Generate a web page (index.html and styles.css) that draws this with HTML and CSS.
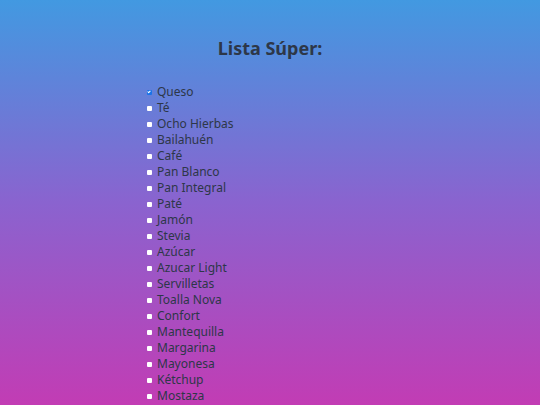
FILE: index.html
```html
<!DOCTYPE html>
<html lang="es">
<head>
<meta charset="utf-8">
<link rel="stylesheet" href="styles.css">
</head>
<body>
<div class="page">
  <h1 class="title">Lista Súper:</h1>
  <ul class="list">
    <li class="item"><input type="checkbox" class="check" checked><span>Queso</span></li>
    <li class="item"><input type="checkbox" class="check"><span>Té</span></li>
    <li class="item"><input type="checkbox" class="check"><span>Ocho Hierbas</span></li>
    <li class="item"><input type="checkbox" class="check"><span>Bailahuén</span></li>
    <li class="item"><input type="checkbox" class="check"><span>Café</span></li>
    <li class="item"><input type="checkbox" class="check"><span>Pan Blanco</span></li>
    <li class="item"><input type="checkbox" class="check"><span>Pan Integral</span></li>
    <li class="item"><input type="checkbox" class="check"><span>Paté</span></li>
    <li class="item"><input type="checkbox" class="check"><span>Jamón</span></li>
    <li class="item"><input type="checkbox" class="check"><span>Stevia</span></li>
    <li class="item"><input type="checkbox" class="check"><span>Azúcar</span></li>
    <li class="item"><input type="checkbox" class="check"><span>Azucar Light</span></li>
    <li class="item"><input type="checkbox" class="check"><span>Servilletas</span></li>
    <li class="item"><input type="checkbox" class="check"><span>Toalla Nova</span></li>
    <li class="item"><input type="checkbox" class="check"><span>Confort</span></li>
    <li class="item"><input type="checkbox" class="check"><span>Mantequilla</span></li>
    <li class="item"><input type="checkbox" class="check"><span>Margarina</span></li>
    <li class="item"><input type="checkbox" class="check"><span>Mayonesa</span></li>
    <li class="item"><input type="checkbox" class="check"><span>Kétchup</span></li>
    <li class="item"><input type="checkbox" class="check"><span>Mostaza</span></li>
  </ul>
</div>
</body>
</html>
```
FILE: styles.css
```css
html, body {
  margin: 0;
  padding: 0;
  height: 100%;
}
body {
  background: linear-gradient(to bottom, #4299e1 0%, #8a63cf 50%, #c23cb4 100%);
  font-family: "Noto Sans", "Open Sans", sans-serif;
  color: #2d3748;
  overflow: hidden;
}
.page {
  display: flex;
  flex-direction: column;
  align-items: center;
}
.title {
  margin: 36px 0 0;
  font-size: 18px;
  font-weight: 700;
  line-height: 24px;
}
.list {
  list-style: none;
  margin: 24px 0 0;
  padding: 0 0 0 147px;
  align-self: flex-start;
}
.item {
  display: flex;
  align-items: center;
  height: 16px;
  font-size: 12px;
  line-height: 16px;
}
.check {
  appearance: none;
  -webkit-appearance: none;
  width: 5px;
  height: 5px;
  margin: 1px 5px 0 0;
  background: #ffffff;
  border: 0;
  border-radius: 1px;
  position: relative;
}
.check:checked {
  background: #1a73e8;
}
.check:checked::after {
  content: "";
  position: absolute;
  left: 1px;
  top: 0px;
  width: 2px;
  height: 3px;
  border: solid #ffffff;
  border-width: 0 1px 1px 0;
  transform: rotate(45deg);
  box-sizing: border-box;
}
```
